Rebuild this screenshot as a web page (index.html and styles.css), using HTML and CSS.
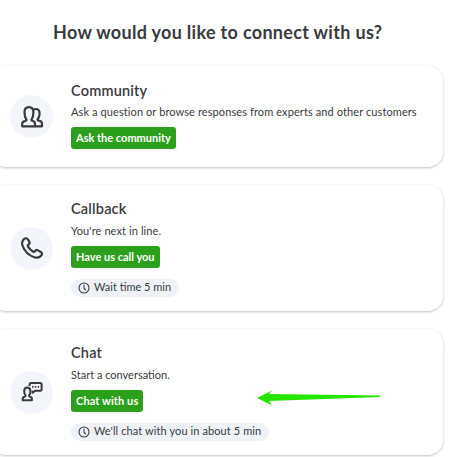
FILE: index.html
```html
<!DOCTYPE html>
<html lang="en">
<head>
    <meta charset="UTF-8">
    <meta name="viewport" content="width=device-width, initial-scale=1.0">
    <title>Contact us</title>
    <link rel="stylesheet" href="styles.css">
</head>
<body>
    <main class="contact">
        <h1 class="heading">How would you like to connect with us?</h1>
        <section class="card card-community">
            <div class="icon">
                <svg width="24" height="24" viewBox="0 0 24 24">
                    <path d="M14.500 21.300H2.200V18.900c0-1.800 1.200-2.500 2.800-2.800l1.100-.5c.5-.3.5-1 .1-1.500C5 12.500 4.500 10.500 4.500 7.300 4.500 4 6.400 2.200 9 2.200s4.400 1.800 4.400 5.100c0 3.200-.5 5.200-1.700 6.800-.4.5-.4 1.200.1 1.500l1.200.5c1.300.3 2 1 2 2.800v2.400z"/>
                    <path d="M13.400 4.800c.6-.5 1.400-.8 2.300-.8 2.400 0 3.900 1.700 3.900 4.500 0 2.400-.6 4.100-1.800 5.500-.4.5-.3 1.100.2 1.400l1.500.5c1.500.3 2.500 1 2.500 2.700v2.700h-7"/>
                </svg>
            </div>
            <div class="info">
                <h2 class="title">Community</h2>
                <p class="text text-wide">Ask a question or browse responses from experts and other customers</p>
                <button class="btn">Ask the community</button>
            </div>
        </section>
        <section class="card card-callback">
            <div class="icon">
                <svg width="24" height="24" viewBox="0 0 24 24">
                    <path d="M4 3.100C5.500 1.800 7 2 8 3.500l1.200 2.100c.7 1.200.4 2.300-.8 3-.8.5-.8 1.200-.3 2 1.100 1.900 2.700 3.600 4.800 4.900.8.5 1.500.4 2-.4.800-1.200 1.900-1.400 3.100-.7l2.800 1.600c1.400.8 1.600 2.200.5 3.500-1.700 2-4.200 2.700-7 1.700C8.500 19.300 4.400 15 2.500 9.500 1.600 6.900 2.100 4.700 4 3.100z"/>
                </svg>
            </div>
            <div class="info">
                <h2 class="title">Callback</h2>
                <p class="text text-wide">You're next in line.</p>
                <button class="btn">Have us call you</button>
                <div class="wait">
                    <svg class="clock" width="12" height="12" viewBox="0 0 12 12"><circle cx="6" cy="6" r="5"/><path d="M6 2.800v3.400l1.900 1.900"/></svg>
                    <span>Wait time 5 min</span>
                </div>
            </div>
        </section>
        <section class="card card-chat">
            <div class="icon">
                <svg width="24" height="24" viewBox="0 0 24 24">
                    <path d="M2.700 20.200v-1.500c0-1.200.8-1.800 2-2 1-.3 1.200-.9.600-1.700-.8-1-1.100-2.200-1.100-3.800 0-2.300 1.200-3.600 3.100-3.600s3.100 1.300 3.100 3.600c0 1.600-.3 2.800-1.100 3.800-.6.8-.4 1.400.6 1.700 1.200.2 2 .8 2 2v1.500z"/>
                    <path d="M9.600 6V4.500c0-1 .5-1.500 1.500-1.500h9c1 0 1.500.5 1.500 1.500v4.800c0 1-.5 1.500-1.500 1.500h-5l-2.500 2v-2"/>
                    <path class="dots" d="M12 6.900h1.500m1.300 0h1.500m1.300 0h1.500"/>
                </svg>
            </div>
            <div class="info">
                <h2 class="title">Chat</h2>
                <p class="text">Start a conversation.</p>
                <button class="btn btn-chat">Chat with us</button>
                <div class="wait wait-chat">
                    <svg class="clock" width="12" height="12" viewBox="0 0 12 12"><circle cx="6" cy="6" r="5"/><path d="M6 2.800v3.400l1.900 1.900"/></svg>
                    <span>We'll chat with you in about 5 min</span>
                </div>
            </div>
            <svg class="arrow" width="123" height="16" viewBox="0 0 123 16"><path d="M0 8L15 .5 12 4 123 5.500V7L12 11l3 4.500z"/></svg>
        </section>
    </main>
</body>
</html>
```

FILE: styles.css
```css
* { box-sizing: border-box; }
body {
    margin: 0;
    background: #fff;
    color: #393a3d;
    font-family: Lato, "Open Sans", sans-serif;
    overflow: hidden;
}
.heading {
    margin: 0;
    padding: 20px 0 22px 53px;
    font-size: 18px;
    line-height: 24px;
    font-weight: 700;
    letter-spacing: 0.32px;
    white-space: nowrap;
}
.card {
    position: relative;
    display: flex;
    align-items: center;
    width: 452px;
    height: 126px;
    margin: 0 0 18px -9px;
    padding-left: 19px;
    border-radius: 15px;
    background: #fff;
    box-shadow: 0 1px 3px rgba(0, 0, 0, 0.24);
}
.card-community { height: 101px; }
.icon {
    display: flex;
    align-items: center;
    justify-content: center;
    width: 43px;
    height: 43px;
    border-radius: 50%;
    background: #f4f5fa;
}
.icon svg {
    fill: none;
    stroke: #393a3d;
    stroke-width: 2.2;
    stroke-linejoin: round;
}
.card-chat .icon svg { stroke-width: 2; }
.icon .dots { stroke-width: 1.6; }
.info {
    align-self: flex-start;
    display: flex;
    flex-direction: column;
    align-items: flex-start;
    margin-left: 18px;
    padding-top: 13px;
    white-space: nowrap;
}
.card-community .info { padding-top: 14px; }
.title {
    margin: 0;
    font-size: 14.5px;
    line-height: 22px;
    font-weight: 600;
    letter-spacing: 0.2px;
}
.text {
    margin: 0 0 5px;
    font-size: 11px;
    line-height: 21px;
}
.card-community .text {
    margin-bottom: 5px;
    line-height: 20px;
}
.text-wide { letter-spacing: 0.1px; }
.btn {
    height: 22px;
    padding: 0 5px;
    border: none;
    border-radius: 3px;
    background: #2ca01c;
    color: #fff;
    font-family: inherit;
    font-size: 11px;
    font-weight: 700;
    line-height: 22px;
    cursor: pointer;
}
.btn-chat { letter-spacing: 0.1px; }
.wait {
    display: flex;
    align-items: center;
    height: 18px;
    margin-top: 11px;
    padding: 0 8px 0 7px;
    border-radius: 9px;
    background: #eff3f7;
    font-size: 11px;
    line-height: 16px;
}
.wait span { margin: -2px 0 0 4px; }
.wait-chat span { letter-spacing: 0.1px; }
.clock {
    fill: none;
    stroke: #393a3d;
    stroke-width: 1.1;
}
/* callout pointing at the chat button */
.arrow {
    position: absolute;
    left: 266px;
    top: 61px;
    fill: #26e600;
}
```
